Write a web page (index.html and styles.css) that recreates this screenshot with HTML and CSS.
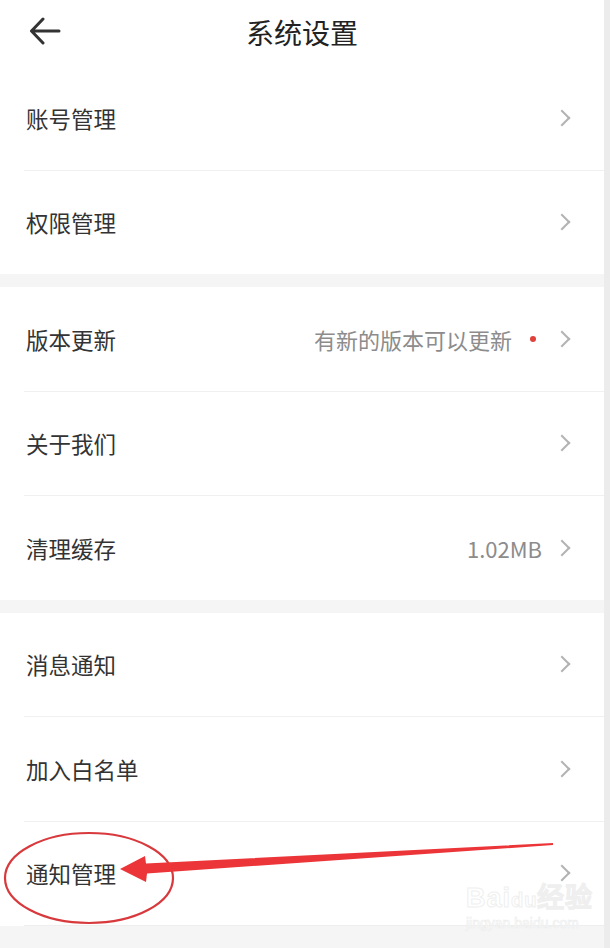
FILE: index.html
```html
<!DOCTYPE html>
<html lang="zh-CN">
<head>
    <meta charset="UTF-8">
    <meta name="viewport" content="width=device-width, initial-scale=1.0">
    <title>系统设置</title>
    <link rel="stylesheet" href="styles.css">
</head>
<body>
    <div class="screen">
        <div class="page">
            <header class="topbar">
                <svg class="back" width="32" height="28" viewBox="0 0 32 28">
                    <path d="M30 14 H3 M14 2 L2.5 14 L14 26" fill="none" stroke="#333" stroke-width="3" stroke-linecap="round" stroke-linejoin="round"/>
                </svg>
                <h1>系统设置</h1>
            </header>

            <section class="group">
                <div class="row"><span class="label">账号管理</span><span class="right"><i class="chev"></i></span></div>
                <div class="row"><span class="label">权限管理</span><span class="right"><i class="chev"></i></span></div>
            </section>

            <section class="group">
                <div class="row"><span class="label">版本更新</span><span class="right"><span class="value">有新的版本可以更新</span><span class="dot"></span><i class="chev"></i></span></div>
                <div class="row"><span class="label">关于我们</span><span class="right"><i class="chev"></i></span></div>
                <div class="row"><span class="label">清理缓存</span><span class="right"><span class="value">1.02MB</span><i class="chev"></i></span></div>
            </section>

            <section class="group last">
                <div class="row"><span class="label">消息通知</span><span class="right"><i class="chev"></i></span></div>
                <div class="row"><span class="label">加入白名单</span><span class="right"><i class="chev"></i></span></div>
                <div class="row"><span class="label">通知管理</span><span class="right"><i class="chev"></i></span></div>
            </section>
        </div>
        <div class="strip"></div>

        <!-- red markup drawn on top of the screenshot -->
        <svg class="markup" width="610" height="948" viewBox="0 0 610 948">
            <ellipse cx="89" cy="878" rx="84" ry="45" fill="none" stroke="#d8393c" stroke-width="2.2"/>
            <polygon points="120,869 145,856 146,863.5 553,843 553,845 147,873.5 146,882" fill="#ec3538"/>
        </svg>
        <div class="watermark">
            <div class="wm-logo">Bai<span class="wm-du">du</span>经验</div>
            <div class="wm-url">jingyan.baidu.com</div>
        </div>
    </div>
</body>
</html>
```

FILE: styles.css
```css
body {
    margin: 0;
    background: #fff;
    font-family: "Noto Sans CJK SC", "Noto Sans", sans-serif;
}
.screen {
    position: relative;
    display: flex;
    width: 610px;
    height: 948px;
    overflow: hidden;
}
.page {
    width: 604px;
    background: #f5f5f5;
}
.strip {
    width: 6px;
    background: #ececec;
}
.topbar {
    position: relative;
    height: 66px;
    background: #fff;
    display: flex;
    align-items: center;
    justify-content: center;
}
.back {
    position: absolute;
    left: 29px;
    top: 17px;
}
.topbar h1 {
    margin: 0;
    font-size: 28px;
    font-weight: 400;
    color: #222;
    line-height: 1;
    margin-top: -2px;
}
.group {
    background: #fff;
    margin-bottom: 13px;
}
.row {
    height: 103.5px;
    margin-left: 24px;
    padding-right: 32px;
    display: flex;
    align-items: center;
    justify-content: space-between;
    border-bottom: 1px solid #f0f0f0;
}
.group .row:last-child {
    border-bottom: none;
}
.group.last .row:last-child {
    border-bottom: 1px solid #eeeeee;
}
.label {
    font-size: 22.5px;
    color: #333;
    margin-left: 2px;
}
.right {
    display: flex;
    align-items: center;
}
.value {
    font-size: 22px;
    color: #8c8c8c;
    margin-right: 14px;
}
.dot {
    width: 6px;
    height: 6px;
    border-radius: 50%;
    background: #e0413b;
    margin-right: 20px;
    margin-left: 4px;
}
.chev {
    display: block;
    width: 10px;
    height: 10px;
    border-top: 2px solid #b3b3b3;
    border-right: 2px solid #b3b3b3;
    transform: rotate(45deg);
    margin-right: 4px;
}
.markup {
    position: absolute;
    left: 0;
    top: 0;
    pointer-events: none;
}
.watermark {
    position: absolute;
    left: 466px;
    top: 883px;
    color: #fff;
    font-family: "Liberation Sans", sans-serif;
    pointer-events: none;
}
.wm-logo {
    font-size: 27px;
    font-weight: 700;
    letter-spacing: 1px;
    line-height: 30px;
    -webkit-text-stroke: 1px #efefef;
}
.wm-du {
    font-size: 20px;
}
.wm-url {
    font-size: 14px;
    line-height: 16px;
    color: #fff;
    -webkit-text-stroke: 0.6px #ececec;
}
```
